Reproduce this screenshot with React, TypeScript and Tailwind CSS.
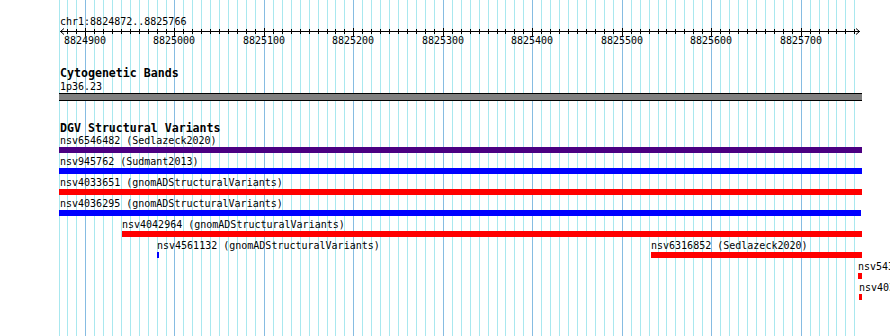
import React from "react";

const px = (b: number) => 85 + (b - 8824900) * 0.8946;

const gridLines = Array.from({ length: 90 }, (_, k) => {
  const i = k - 3;
  const b = 8824900 + i * 10;
  let x = Math.round(px(b));
  if (x < 59) x = 59;
  return { x, major: b % 100 === 0, b, i };
});

type Feature = { x: number; w: number; color: string; label: string; lx?: number };

const rows: Feature[][] = [
  [{ x: 59, w: 803, color: "#4b0082", label: "nsv6546482 (Sedlazeck2020)", lx: 1 }],
  [{ x: 59, w: 803, color: "#0000ff", label: "nsv945762 (Sudmant2013)", lx: 1 }],
  [{ x: 59, w: 803, color: "#ff0000", label: "nsv4033651 (gnomADStructuralVariants)", lx: 1 }],
  [{ x: 59, w: 802, color: "#0000ff", label: "nsv4036295 (gnomADStructuralVariants)", lx: 1 }],
  [{ x: 122, w: 740, color: "#ff0000", label: "nsv4042964 (gnomADStructuralVariants)" }],
  [
    { x: 157, w: 2, color: "#0000ff", label: "nsv4561132 (gnomADStructuralVariants)" },
    { x: 651, w: 211, color: "#ff0000", label: "nsv6316852 (Sedlazeck2020)" },
  ],
  [{ x: 858, w: 4, color: "#ff0000", label: "nsv5431870 (gnomADStructuralVariants)" }],
  [{ x: 859, w: 3, color: "#ff0000", label: "nsv4034112 (gnomADStructuralVariants)" }],
];

const mono = "font-['DejaVu_Sans_Mono',monospace]";

export default function App() {
  return (
    <div className="relative w-[890px] h-[336px] overflow-hidden bg-white text-black">
      {/* background grid */}
      <svg className="absolute left-0 top-0" width={890} height={336}>
        {gridLines.map((g) => (
          <line
            key={g.i}
            x1={g.x + 0.5}
            x2={g.x + 0.5}
            y1={0}
            y2={336}
            stroke={g.major ? "#86bce2" : "#a9e8ef"}
            strokeWidth={1}
          />
        ))}
      </svg>

      <div className={`relative flex flex-col ${mono}`}>
        {/* ruler */}
        <div className="pt-[15px] pl-[60px] text-[10px] leading-[13px] whitespace-nowrap">
          chr1:8824872..8825766
        </div>
        <svg width={890} height={19} className="block">
          <line x1={60} x2={860} y1={3.5} y2={3.5} stroke="#000" strokeWidth={1} />
          <polyline points="64,0.5 60.5,3.5 64,6.5" fill="none" stroke="#000" strokeWidth={1} />
          <polyline points="856,0.5 859.5,3.5 856,6.5" fill="none" stroke="#000" strokeWidth={1} />
          {gridLines
            .filter((g) => g.i >= -2)
            .map((g) => (
              <line
                key={g.i}
                x1={g.x + 0.5}
                x2={g.x + 0.5}
                y1={g.major ? 0 : 1}
                y2={g.major ? 8 : 6}
                stroke="#000"
                strokeWidth={1}
              />
            ))}
          {gridLines
            .filter((g) => g.major)
            .map((g) => (
              <text
                key={g.i}
                x={g.x}
                y={16}
                textAnchor="middle"
                fontFamily="DejaVu Sans Mono, monospace"
                fontSize={10}
                fill="#000"
              >
                {g.b}
              </text>
            ))}
        </svg>

        {/* Cytogenetic Bands */}
        <div className="relative top-px mt-[19px] pl-[60px] font-bold text-[11.6px] leading-[13px] whitespace-nowrap">
          Cytogenetic Bands
        </div>
        <div className="relative top-px pl-[60px] text-[10px] leading-[13px] whitespace-nowrap">
          1p36.23
        </div>
        <div className="mt-px ml-[59px] w-[803px] h-[8px] border-y border-black bg-[#808080]" />

        {/* DGV Structural Variants */}
        <div className="relative top-px mt-[20px] pl-[60px] font-bold text-[11.6px] leading-[13px] whitespace-nowrap">
          DGV Structural Variants
        </div>
        <div className="flex flex-col">
          {rows.map((row, ri) => (
            <div key={ri} className="relative h-[21px]">
              {row.map((f, fi) => (
                <div
                  key={fi}
                  className="absolute top-0 flex flex-col"
                  style={{ left: f.x }}
                >
                  <div
                    className="text-[10px] leading-[13px] whitespace-nowrap"
                    style={{ paddingLeft: f.lx ?? 0 }}
                  >
                    {f.label}
                  </div>
                  <div className="h-[6px]" style={{ width: f.w, backgroundColor: f.color }} />
                </div>
              ))}
            </div>
          ))}
        </div>
      </div>
    </div>
  );
}
